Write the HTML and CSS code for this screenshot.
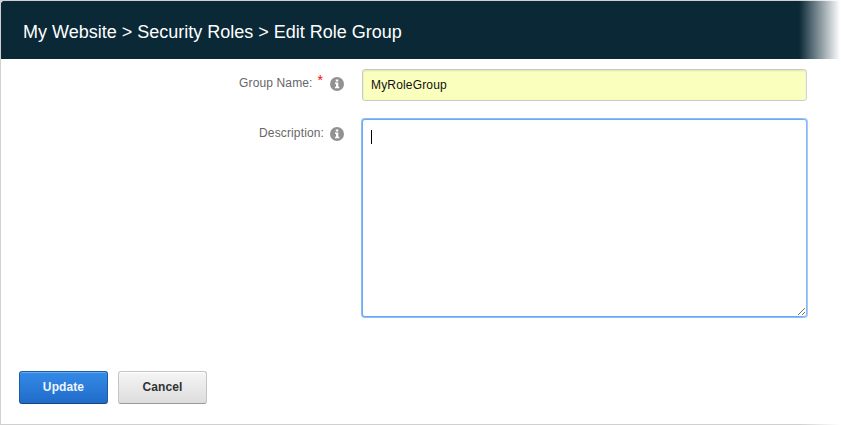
FILE: index.html
```html
<!DOCTYPE html>
<html lang="en">
<head>
<meta charset="utf-8">
<title>Edit Role Group</title>
<link rel="stylesheet" href="styles.css">
</head>
<body>
<div class="dialog">
  <header class="titlebar">My Website &gt; Security Roles &gt; Edit Role Group</header>
  <main class="form">
    <div class="row">
      <div class="label">Group Name:<span class="required">*</span><svg class="info" viewBox="0 0 14 14"><circle cx="7" cy="7" r="7"/><path d="M5.800 2.500h2.500v2H5.800zM5 5.500h3.300v4.300h1v1.400H5V9.800h1V6.900H5z"/></svg></div>
      <div class="field name">MyRoleGroup</div>
    </div>
    <div class="row description">
      <div class="label">Description:<svg class="info" viewBox="0 0 14 14"><circle cx="7" cy="7" r="7"/><path d="M5.800 2.500h2.500v2H5.800zM5 5.500h3.300v4.300h1v1.400H5V9.800h1V6.900H5z"/></svg></div>
      <div class="field area"><span class="caret"></span><svg class="grip" viewBox="0 0 9 9"><path d="M1 8L8 1M5 8L8 5"/></svg></div>
    </div>
  </main>
  <footer class="actions"><button class="button primary">Update</button><button class="button">Cancel</button></footer>
  <div class="fade"></div>
</div>
</body>
</html>
```
FILE: styles.css
```css
* { box-sizing: border-box; }
body { margin: 0; background: #fff; font-family: "Liberation Sans", Arial, sans-serif; }
.dialog { position: relative; width: 841px; height: 425px; border: solid #d0d0d0; border-width: 1px 0 1px 1px; }
.titlebar { height: 58px; padding: 0 22px; border-top-left-radius: 3px; background: #0a2836; color: #fff; font-size: 18px; line-height: 62px; }
.form { padding-top: 10px; }
.row { display: flex; }
.label { display: flex; justify-content: flex-end; width: 343px; margin-right: 18px; padding-top: 7px; color: #666; font-size: 12px; line-height: 14px; letter-spacing: 0.13px; }
.required { margin: -3px 0 0 5px; color: #f00; font-size: 14px; letter-spacing: 1px; }
.info { width: 14px; height: 14px; margin: 1px 0 0 6px; fill: #929292; }
.info path { fill: #fff; }
.field { width: 445px; border: 1px solid #c9c9c9; border-radius: 3px; font-size: 12px; color: #111; }
.name { height: 32px; padding: 0 8px; background: #faffbd; box-shadow: inset 0 1px 2px rgba(0, 0, 0, 0.12); line-height: 30px; letter-spacing: 0.17px; }
.description { margin-top: 18px; }
.area { position: relative; height: 198px; padding: 10px 8px; border-color: #6ba8f6; background: #fff; box-shadow: 0 0 0 1px #8bbcfa; }
.caret { display: block; width: 1px; height: 14px; background: #000; }
.grip { position: absolute; right: 0; bottom: 0; width: 9px; height: 9px; fill: none; stroke: #666; }
.actions { display: flex; gap: 10px; padding: 54px 18px 0; }
.button { width: 89px; height: 33px; padding: 0 0 1px; border: 1px solid #c4c4c4; border-bottom-color: #999; border-radius: 3px; background: linear-gradient(#f5f5f5, #ddd); box-shadow: inset 0 1px #fff; color: #333; font: bold 12px "Liberation Sans", Arial, sans-serif; letter-spacing: 0.1px; }
.primary { border-color: #1c5b9f; border-bottom-color: #154777; background: linear-gradient(#358ae7, #206cca); box-shadow: inset 0 1px #6aabef; color: #eef5ff; }
.fade { position: absolute; top: -1px; right: 0; width: 42px; height: 425px; background: linear-gradient(90deg, rgba(255, 255, 255, 0), #fff 41px); }
```
